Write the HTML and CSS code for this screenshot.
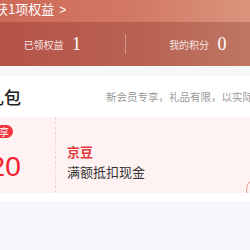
FILE: index.html
```html
<!DOCTYPE html>
<html lang="zh-CN">
<head>
  <meta charset="UTF-8">
  <meta name="viewport" content="width=device-width, initial-scale=1.0">
  <title>会员权益</title>
  <link rel="stylesheet" href="styles.css">
</head>
<body>
  <div class="page">
    <!-- Member banner -->
    <div class="banner">
      <div class="banner-top">获1项权益 <span class="arrow">&gt;</span></div>
      <div class="banner-stats">
        <div class="stat">已领权益 <span class="num">1</span></div>
        <div class="stat-divider"></div>
        <div class="stat">我的积分 <span class="num">0</span></div>
      </div>
    </div>

    <!-- Gift section -->
    <div class="gift">
      <div class="gift-head">
        <h2>礼包</h2>
        <span class="gift-note">新会员专享，礼品有限，以实际发放为准</span>
      </div>
      <div class="coupon">
        <div class="coupon-left">
          <span class="tag">专享</span>
          <div class="amount">¥20</div>
        </div>
        <div class="coupon-right">
          <div class="coupon-type">京豆</div>
          <div class="coupon-desc">满额抵扣现金</div>
        </div>
        <div class="coupon-btn"></div>
      </div>
    </div>
  </div>
</body>
</html>
```

FILE: styles.css
```css
body {
  margin: 0;
  font-family: "Noto Sans CJK SC", "Noto Sans", sans-serif;
  background-color: #f6f7fa;
  overflow: hidden;
}

.page {
  width: 290px;
  margin-left: -20px;
}

/* Banner */
.banner {
  background: linear-gradient(90deg, #cd6756 0%, #d27a66 55%, #dc9a80 100%);
  color: #fff;
}

.banner-top {
  height: 22px;
  line-height: 17px;
  font-size: 13px;
  padding-left: 15px;
  white-space: nowrap;
}

.banner-top .arrow {
  font-family: "Liberation Sans", Arial, sans-serif;
  font-size: 12px;
  margin-left: 2px;
}

.banner-stats {
  display: flex;
  align-items: center;
  height: 44px;
  background: linear-gradient(90deg, rgba(135, 40, 40, 0.35), rgba(125, 50, 45, 0.3));
}

.stat {
  flex: 1;
  text-align: center;
  font-size: 10px;
  color: #f6e6e2;
}

.stat .num {
  font-family: "Liberation Serif", serif;
  font-size: 18px;
  margin-left: 6px;
  color: #fff;
  vertical-align: -1px;
}

.stat-divider {
  width: 1px;
  height: 20px;
  background-color: rgba(255, 255, 255, 0.35);
}

/* Gift section */
.gift {
  margin-top: 10px;
  background-color: #fff;
  padding-bottom: 8px;
}

.gift-head {
  display: flex;
  align-items: center;
  height: 41px;
  padding-left: 7px;
  white-space: nowrap;
}

.gift-head h2 {
  margin: 0;
  font-size: 17px;
  font-weight: 500;
  color: #222;
}

.gift-note {
  font-size: 10.5px;
  color: #999;
  margin-left: 85px;
}

.coupon {
  display: flex;
  position: relative;
  height: 76px;
  background-color: #fff2f2;
  overflow: hidden;
}

.coupon-left {
  width: 75px;
  border-right: 1px dashed #f3d3d3;
  white-space: nowrap;
}

.tag {
  display: inline-block;
  margin-top: 1px;
  margin-left: 3px;
  padding: 0 4px 0 6px;
  height: 13px;
  line-height: 13px;
  font-size: 10px;
  color: #fff;
  background-color: #f2323c;
  border-radius: 7px;
}

.amount {
  margin-top: 11px;
  margin-left: -6px;
  font-family: "Liberation Sans", Arial, sans-serif;
  font-size: 28px;
  line-height: 30px;
  color: #f2202e;
}

.coupon-right {
  padding: 26px 0 0 11px;
}

.coupon-type {
  font-size: 13px;
  font-weight: bold;
  line-height: 18px;
  color: #e4393c;
}

.coupon-desc {
  font-size: 13px;
  line-height: 20px;
  margin-top: 1px;
  color: #333;
}

.coupon-btn {
  position: absolute;
  left: 266px;
  top: 60px;
  width: 24px;
  height: 24px;
  border: 1px solid #ea9a90;
  border-radius: 50%;
}
```
